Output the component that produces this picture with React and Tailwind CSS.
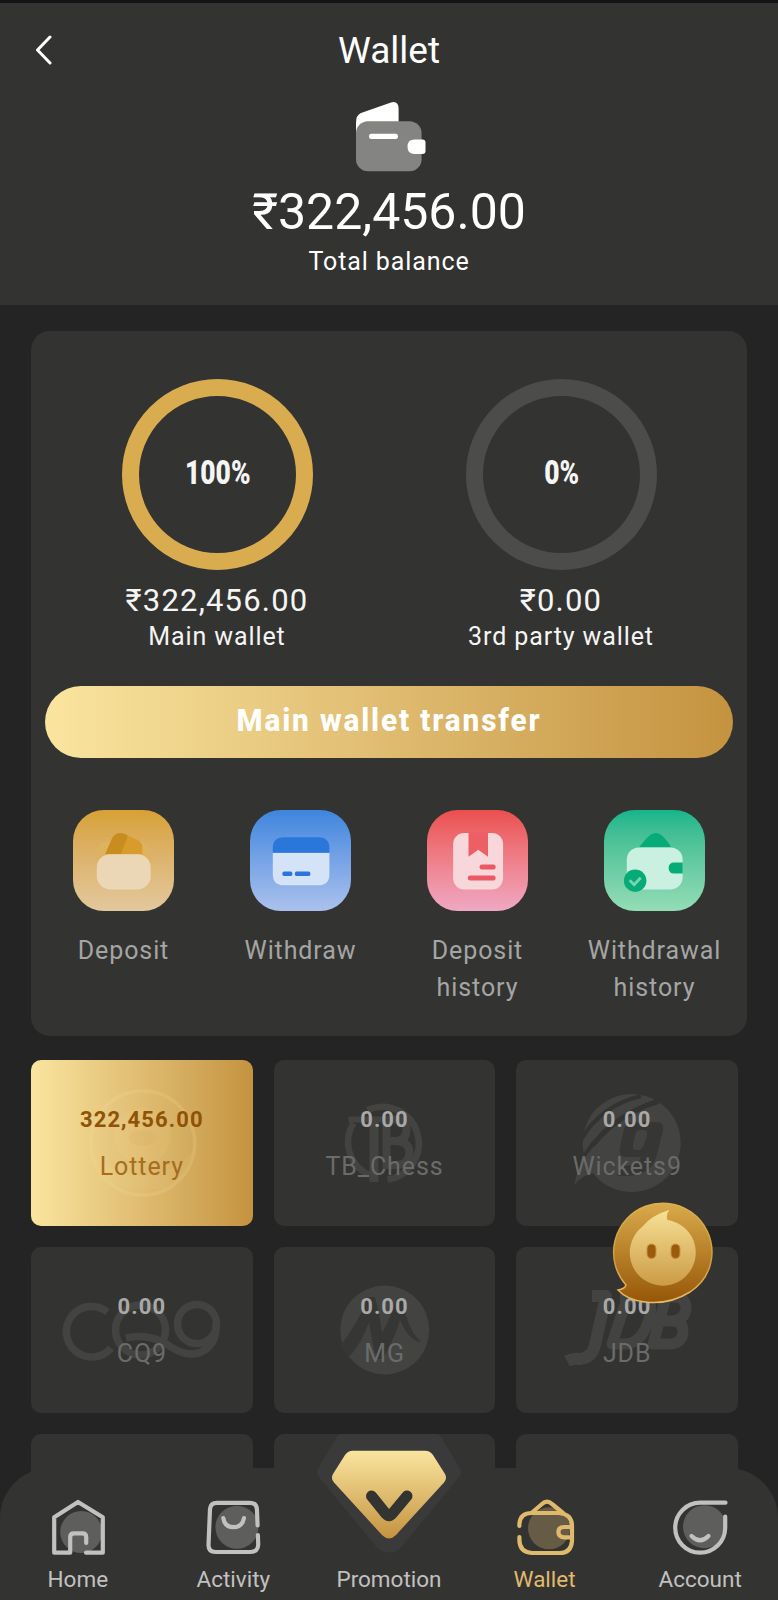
import React from "react";

const LOGO = "#434342";

function BackIcon() {
  return (
    <svg width="20" height="32" viewBox="0 0 20 32" fill="none" stroke="#fff" strokeWidth="3" strokeLinecap="round" strokeLinejoin="round">
      <path d="M16 2 3.500 15 16 28" />
    </svg>
  );
}

function BalanceIcon() {
  return (
    <svg width="72" height="71" viewBox="0 0 72 71">
      <path d="M1 33V22Q1 14 6 12L36 1.5Q43.6-.5 43.6 8V24H16Z" fill="#fff" />
      <rect x="1" y="20.3" width="65.6" height="50" rx="12" fill="#848483" />
      <rect x="14" y="32.7" width="29" height="5.4" rx="2.4" fill="#fff" />
      <path d="M59.5 38.6H67.500Q70.500 38.6 70.500 41.6V50Q70.500 53 67.500 53H59.5Q52.5 53 52.5 45.8T59.5 38.6Z" fill="#fff" />
    </svg>
  );
}

function DepositIcon() {
  return (
    <svg width="102" height="102" viewBox="0 0 101.5 101.5">
      <path d="M24 56V42Q25 34 33 31H68Q77 34 77.3 44V56Z" fill="#dfb25f" />
      <path d="M32 44 38.5 29Q41 23.2 47 23.2 52 23 56 26L64 29.5Q69.5 32 69 38V44Z" fill="#d89c2d" />
      <path d="M32 44 38.5 29Q41 23.2 47 23.2 52 23 54.5 26L47.5 44Z" fill="#c88d20" />
      <rect x="23.7" y="44" width="53.6" height="35" rx="13" fill="#ebd7b5" />
    </svg>
  );
}

function WithdrawIcon() {
  return (
    <svg width="102" height="102" viewBox="0 0 101.5 101.5">
      <path d="M22.7 42.5H79V64Q79 75 68 75H33.7Q22.7 75 22.7 64Z" fill="#d5e3f8" />
      <path d="M22.7 42.5V38Q22.7 27 33.7 27H68Q79 27 79 38V42.5Z" fill="#2b76db" />
      <rect x="32.3" y="61.3" width="9.8" height="4.4" rx="1.6" fill="#2b76db" />
      <rect x="44.7" y="61.3" width="15.3" height="4.4" rx="1.6" fill="#2b76db" />
    </svg>
  );
}

function DepositHistoryIcon() {
  return (
    <svg width="102" height="102" viewBox="0 0 101.5 101.5">
      <rect x="26" y="23" width="49.7" height="56" rx="11" fill="#f8d7db" />
      <path d="M41.3 22.5H60.7V46.5L51 39.5 41.3 46.5Z" fill="#eb5f65" />
      <rect x="52.3" y="54.3" width="16" height="4.8" rx="2.2" fill="#e95a66" />
      <rect x="40.7" y="65.3" width="27.6" height="4.8" rx="2.2" fill="#e95a66" />
    </svg>
  );
}

function WithdrawalHistoryIcon() {
  return (
    <svg width="102" height="102" viewBox="0 0 101.5 101.5">
      <path d="M35.3 36.8Q41 29 46 25 51.5 21 57 25 62 29 66.700 36.800Z" fill="#06ab77" />
      <rect x="22.7" y="37.3" width="55.6" height="41.7" rx="12" fill="#caf0e2" />
      <path d="M78.3 52.3H70Q64.3 52.3 64.3 57.8T70 63.3H78.3Z" fill="#06ab77" />
      <circle cx="31" cy="70.3" r="11.2" fill="#06ab77" />
      <path d="M25.5 70 30 74.3 36.5 67.5" fill="none" stroke="#79d6b2" strokeWidth="2.8" />
    </svg>
  );
}

function LotteryLogo() {
  return (
    <g opacity=".2">
      <circle cx="111.7" cy="83" r="52" fill="#fff" fillOpacity=".08" stroke="#f6df9c" strokeWidth="3.500" />
      <circle cx="111.7" cy="76" r="28" fill="#f6df9c" fillOpacity=".5" />
      <ellipse cx="111.7" cy="78" rx="14" ry="8" fill="#c8974a" fillOpacity=".4" />
      <path d="M62 92Q84 116 111 116T162 92Q160 122 135 129H88Q64 120 62 92Z" fill="#f6df9c" fillOpacity=".4" />
    </g>
  );
}

function TbLogo() {
  return (
    <g fill="none" stroke={LOGO} transform="translate(1.5 0)">
      <path d="M78 63A36 36 0 0 0 94 115M92 50A36.500 36.500 0 1 1 112 119.500" strokeWidth="6.500" />
      <path d="M73 59.500H106" strokeWidth="6" />
      <path d="M98.500 62V122" strokeWidth="9" />
      <path d="M111 58V107M107 59.500H121Q131 60 131 70T121 81H110M121 81Q134 82 134 93T121 105H107" strokeWidth="8" />
    </g>
  );
}

function WicketsLogo() {
  return (
    <g>
      <circle cx="115.700" cy="83" r="49" fill={LOGO} />
      <path d="M63 106Q88 58 143 41" fill="none" stroke="#333331" strokeWidth="5" />
      <path d="M65 80Q84 46 125 36" fill="none" stroke="#333331" strokeWidth="4" />
      <path d="M58 125Q62 104 78 86L84 112Q68 113 58 125Z" fill={LOGO} />
      <path fillRule="evenodd" d="M117 62H141Q148 62 147 70L140 98Q134 115 112 116H101L104 106Q121 107 125 97H110Q102 97 104 87L108 69Q110 62 117 62ZM125 70Q120 70 119 75L117 85Q116 90 121 90 127 90 128 84L131 76Q132 70 128 70Z" fill="#363635" />
    </g>
  );
}

function Cq9Logo() {
  return (
    <g fill="none" stroke={LOGO} strokeWidth="7.500">
      <path d="M76.500 65A25.300 25.300 0 1 0 80 101" />
      <circle cx="109.500" cy="83" r="25" />
      <circle cx="166" cy="77" r="19.500" />
      <path d="M95 91Q118 86 137 98 158 113 174 103 186 95 185 77" />
    </g>
  );
}

function MgLogo() {
  return (
    <g>
      <circle cx="110.700" cy="83" r="44.500" fill={LOGO} />
      <path d="M66 99Q84 77 94 50H101Q106 68 108 86 116 72 123 51H128Q133 82 147 95 135 94 126 73 119 96 108 112H103Q98 96 95 75 88 96 75 110Z" fill="#363635" />
    </g>
  );
}

function JdbLogo() {
  return (
    <g fill="none" stroke={LOGO} strokeLinejoin="round">
      <path d="M76 49H90L79 98Q76 111 64 112 57 111 51 114" strokeWidth="12" />
      <path d="M112 48 96 97H108Q126 97 133 72 139 51 124 50H104" strokeWidth="11" />
      <path d="M150 50 137 97H153Q167 97 167 84 167 75 157 74H146M157 74Q170 72 170 60 169 50 158 50H142" strokeWidth="11" />
    </g>
  );
}

const wallets = [
  { amount: "322,456.00", name: "Lottery", Logo: LotteryLogo, active: true },
  { amount: "0.00", name: "TB_Chess", Logo: TbLogo },
  { amount: "0.00", name: "Wickets9", Logo: WicketsLogo },
  { amount: "0.00", name: "CQ9", Logo: Cq9Logo },
  { amount: "0.00", name: "MG", Logo: MgLogo },
  { amount: "0.00", name: "JDB", Logo: JdbLogo },
];

function WalletTile({ amount, name, Logo, active }) {
  return (
    <div className={`relative flex h-[166px] flex-col items-center rounded-[10px] pt-[40px] ${active ? "bg-linear-to-r from-[#fae59f] to-[#c4933f]" : "bg-[#333331]"}`}>
      <svg className="absolute inset-0" width="222" height="166" viewBox="0 0 222 166"><Logo /></svg>
      <span className={`relative text-[22px] leading-[40px] font-bold tracking-[1.1px] ${active ? "text-[#8f5206]" : "text-[#a9a9a8]"}`}>{amount}</span>
      <span className={`relative text-[25px] leading-[54px] tracking-[0.900px] ${active ? "text-[#a56d1d]" : "text-[#6b6b6a]"}`}>{name}</span>
    </div>
  );
}

function Ring({ percent, amount, label, ring }) {
  return (
    <div className="flex flex-1 flex-col items-center text-[#f5f5f4]">
      <div className={`flex size-[191px] items-center justify-center rounded-full border-[17.500px] ${ring}`}>
        <span className="scale-x-[.8] pb-[4px] pl-[2px] text-[33px] leading-[36px] font-black">{percent}</span>
      </div>
      <div className="mt-[10px] text-[31px] leading-[41px] tracking-[1.200px]">{amount}</div>
      <div className="text-[25px] leading-[32px] tracking-[0.900px]">{label}</div>
    </div>
  );
}

function Action({ bg, Icon, label }) {
  return (
    <div className="flex flex-1 flex-col items-center">
      <div className={`size-[101.500px] overflow-hidden rounded-[31px] bg-linear-to-b ${bg}`}><Icon /></div>
      <div className="mt-[20.500px] w-[150px] text-center text-[25px] leading-[37px] tracking-[0.900px] text-[#a5a5a4]">{label}</div>
    </div>
  );
}

function NavItem({ label, children, active }) {
  return (
    <div className={`flex flex-1 flex-col items-center pt-[27px] ${active ? "text-[#e0ba6c]" : "text-[#c1c1c0]"}`}>
      <svg width="70" height="64" viewBox="0 0 70 64" fill="none" stroke="currentColor" strokeWidth="4.200" strokeLinecap="round" strokeLinejoin="round">{children}</svg>
      <span className="mt-[5px] text-[22.500px] leading-[30px]">{label}</span>
    </div>
  );
}

function Promotion() {
  return (
    <svg className="absolute -top-[34px] left-1/2 -translate-x-1/2" width="146" height="120" viewBox="0 0 146 120">
      <defs>
        <linearGradient id="gem" x1="0" y1="0" x2="0" y2="1">
          <stop offset="0" stopColor="#fae59f" />
          <stop offset="1" stopColor="#c4933f" />
        </linearGradient>
      </defs>
      <path d="M27 8H119L137 38 80 107Q73 114 66 107L9 38Z" fill="#3a3a3b" stroke="#3a3a3b" strokeWidth="16" strokeLinejoin="round" />
      <path d="M37 16.700H109Q114 16.700 117 21L129 40Q131.500 44.500 128 48.500L80 101Q73 108 66 101L18 48.500Q14.500 44.500 17 40L29 21Q32 16.700 37 16.700Z" fill="url(#gem)" />
      <path d="M55.500 62 70 80Q73 83.500 76 80L91 62" fill="none" stroke="#333331" strokeWidth="11" strokeLinecap="round" strokeLinejoin="round" />
    </svg>
  );
}

function SupportBubble() {
  return (
    <svg className="absolute top-[1203px] left-[612px] overflow-visible" width="102" height="102" viewBox="0 0 102 102">
      <defs>
        <linearGradient id="shell" x1="0" y1="0" x2="0" y2="1">
          <stop offset="0" stopColor="#d9aa4b" />
          <stop offset="1" stopColor="#965708" />
        </linearGradient>
        <linearGradient id="face" x1="0" y1="0" x2="0" y2="1">
          <stop offset="0" stopColor="#f7e196" />
          <stop offset="1" stopColor="#cc9b46" />
        </linearGradient>
        <linearGradient id="rim" x1="0" y1="0" x2="0" y2="1">
          <stop offset="0" stopColor="#dcb050" />
          <stop offset=".6" stopColor="#cf9c40" />
          <stop offset="1" stopColor="#e6bd68" />
        </linearGradient>
      </defs>
      <path d="M14 82A49.200 49.200 0 1 1 100 50Q99 75 78 89 57 102 33 99 15 97 6 87 13 86 14 82Z" fill="url(#shell)" stroke="url(#rim)" strokeWidth="1.500" />
      <path d="M56 7Q52 11 54 17A33 33 0 1 1 28.500 24Q38 12 56 7Z" fill="url(#face)" transform="translate(1.5 0)" />
      <rect x="35" y="41" width="9" height="14.500" rx="4.500" fill="#9a5c0c" stroke="#c8953e" strokeWidth="1" />
      <rect x="59" y="41" width="9" height="14.500" rx="4.500" fill="#9a5c0c" stroke="#c8953e" strokeWidth="1" />
    </svg>
  );
}

export default function App() {
  return (
    <div className="relative h-[1600px] w-[778px] overflow-hidden bg-[#242424] font-['Roboto',sans-serif]">
      <header className="flex h-[305px] flex-col items-center border-t-[3px] border-[#131318] bg-[#333331] text-white">
        <div className="grid w-full grid-cols-[1fr_auto_1fr] items-center px-[34px]">
          <BackIcon />
          <h1 className="text-[37px] leading-[95px]">Wallet</h1>
        </div>
        <div className="mt-[3px] pl-[3px]"><BalanceIcon /></div>
        <div className="mt-[10px] text-[50px] leading-[60px]">₹322,456.00</div>
        <div className="text-[25px] leading-[40px] tracking-[0.900px]">Total balance</div>
      </header>

      <main className="px-[31px]">
        <section className="mt-[25.500px] h-[705px] w-[716px] rounded-[19px] bg-[#333331] px-[14px] pt-[48.500px]">
          <div className="flex">
            <Ring percent="100%" amount="₹322,456.00" label="Main wallet" ring="border-[#d9ac4f]" />
            <Ring percent="0%" amount="₹0.00" label="3rd party wallet" ring="border-[#4c4c4a]" />
          </div>
          <button className="mt-[33px] block h-[72px] w-full rounded-full bg-linear-to-r from-[#fae59f] to-[#c4933f] pb-[4px] text-white">
            <span className="inline-block scale-x-[.93] text-[32px] leading-[40px] font-extrabold tracking-[2px]">Main wallet transfer</span>
          </button>
          <div className="-mx-[10px] mt-[51.500px] flex">
            <Action bg="from-[#d7a136] to-[#e3c89d]" Icon={DepositIcon} label="Deposit" />
            <Action bg="from-[#3d85dd] to-[#abc1ed]" Icon={WithdrawIcon} label="Withdraw" />
            <Action bg="from-[#ea4f4e] to-[#efa8c4]" Icon={DepositHistoryIcon} label="Deposit history" />
            <Action bg="from-[#12b58b] to-[#93ddb6]" Icon={WithdrawalHistoryIcon} label="Withdrawal history" />
          </div>
        </section>

        <section className="mt-[24.500px] grid w-[707px] grid-cols-3 gap-[21px]">
          {wallets.map((w) => <WalletTile key={w.name} {...w} />)}
          <div className="h-[166px] rounded-[10px] bg-[#333331]" />
          <div className="h-[166px] rounded-[10px] bg-[#333331]" />
          <div className="h-[166px] rounded-[10px] bg-[#333331]" />
        </section>
      </main>

      <nav className="absolute inset-x-0 bottom-0 flex h-[132px] rounded-t-[50px] bg-[#333331]">
        <Promotion />
        <NavItem label="Home">
          <circle cx="38.200" cy="37" r="21" fill="#5e5e5d" stroke="none" />
          <path d="M27.200 57.700H11.200V22.300L35 7 59.800 22.300V57.700H43M27.200 57.700V42Q27.200 38.300 31 38.300H39.500Q43.200 38.300 43.200 42V48" />
        </NavItem>
        <NavItem label="Activity">
          <circle cx="38.900" cy="32.300" r="21.500" fill="#5e5e5d" stroke="none" />
          <path d="M59.600 30.500 58.900 14Q58.400 7.800 52 7.800H19Q12.500 7.800 12 14L10.500 50Q10.500 57 17.500 57H52Q60.500 57 60.200 49L59.900 40" />
          <path d="M25.300 23Q26.500 32 35.300 32.200 44.500 32 46 23" />
        </NavItem>
        <NavItem label="Promotion" />
        <NavItem label="Wallet" active>
          <circle cx="39" cy="33.300" r="21" fill="#665b44" stroke="none" />
          <path d="M9.400 31V29Q10 18 22 18H49Q62 19 62 31V46Q61 58 50 58H22Q9.400 57 9.400 45V42" />
          <path d="M22 17.500 32 9Q37 4 42 9L53 18M61 32H54Q48.400 32 48.400 37T54 42.300H61" />
        </NavItem>
        <NavItem label="Account">
          <circle cx="39.500" cy="31.700" r="21.500" fill="#5e5e5d" stroke="none" />
          <path d="M60.500 7.700H35.300A25 25 0 1 0 60.200 33V21.500" />
          <path d="M26.500 41Q35 49.500 43.500 41" />
        </NavItem>
      </nav>

      <SupportBubble />
    </div>
  );
}
